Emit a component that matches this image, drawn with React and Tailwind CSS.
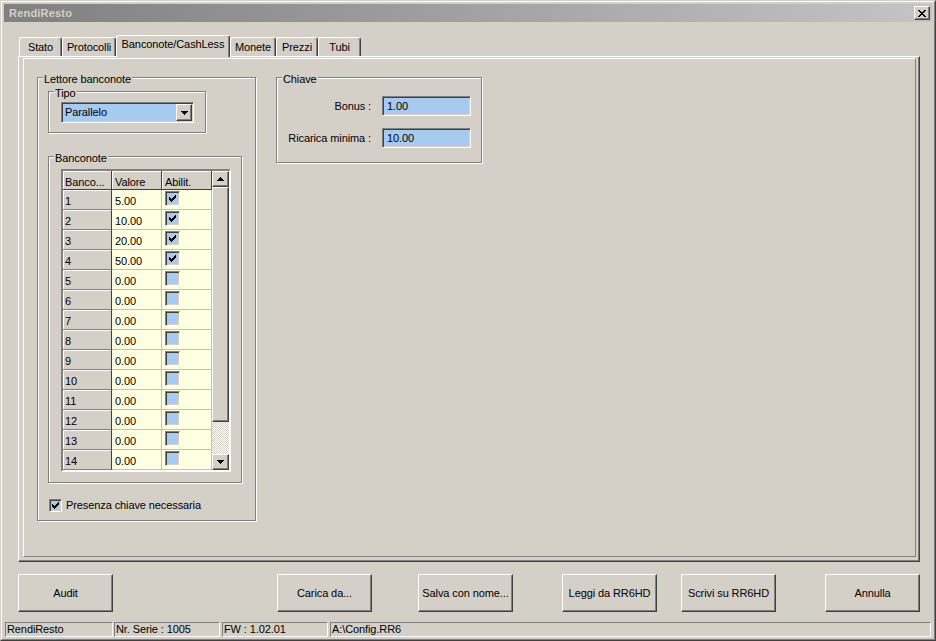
import React from "react";

const RAISED =
  "border border-t-white border-l-white border-r-[#404040] border-b-[#404040] shadow-[inset_-1px_-1px_0_#808080]";
const SUNKEN =
  "border border-t-[#808080] border-l-[#808080] border-r-white border-b-white shadow-[inset_1px_1px_0_#404040,inset_-1px_-1px_0_#d4d0c8]";
const ETCHED = "border border-[#808080] shadow-[inset_1px_1px_0_#fff,1px_1px_0_#fff]";
const STATUS =
  "border border-t-[#808080] border-l-[#808080] border-r-white border-b-white pl-[1px] flex items-center whitespace-nowrap";

function Group({ label, className, children }) {
  return (
    <div className={`relative ${ETCHED} ${className}`}>
      <span className="absolute left-[5px] top-[-5px] bg-[#d4d0c8] px-[1px] leading-[13px] whitespace-nowrap">
        {label}
      </span>
      {children}
    </div>
  );
}

function Check({ checked, size }) {
  const cls =
    size === 13
      ? `w-[13px] h-[13px] ${SUNKEN} bg-[#a6caf0] flex items-center justify-center shrink-0`
      : `w-[15px] h-[15px] ${SUNKEN} bg-[#a6caf0] flex items-center justify-center shrink-0`;
  return (
    <div className={cls}>
      {checked && (
        <svg width="7" height="7" viewBox="0 0 7 7" shapeRendering="crispEdges">
          <path d="M0 2h1v1h1v1h1v-1h1v-1h1v-1h1v-1h1v3h-1v1h-1v1h-1v1h-1v1h-1v-1h-1v-1h-1v-1h-1z" fill="#000" />
        </svg>
      )}
    </div>
  );
}

function ArrowDown() {
  return (
    <svg width="7" height="4" viewBox="0 0 7 4" shapeRendering="crispEdges">
      <path d="M0 0h7v1h-1v1h-1v1h-1v1h-1v-1h-1v-1h-1v-1h-1z" fill="#000" />
    </svg>
  );
}
function ArrowUp() {
  return (
    <svg width="7" height="4" viewBox="0 0 7 4" shapeRendering="crispEdges">
      <path d="M3 0h1v1h1v1h1v1h1v1h-7v-1h1v-1h1v-1h1z" fill="#000" />
    </svg>
  );
}

const tabs = [
  ["Stato", "w-[43px]"],
  ["Protocolli", "w-[54px]"],
  ["Banconote/CashLess", "w-[114px]", true],
  ["Monete", "w-[46px]"],
  ["Prezzi", "w-[42px]"],
  ["Tubi", "w-[43px]"],
];

const rows = [
  ["1", "5.00", true],
  ["2", "10.00", true],
  ["3", "20.00", true],
  ["4", "50.00", true],
  ["5", "0.00", false],
  ["6", "0.00", false],
  ["7", "0.00", false],
  ["8", "0.00", false],
  ["9", "0.00", false],
  ["10", "0.00", false],
  ["11", "0.00", false],
  ["12", "0.00", false],
  ["13", "0.00", false],
  ["14", "0.00", false],
];

const buttons = [
  ["Audit", "ml-[14px]"],
  ["Carica da...", "ml-[164px]"],
  ["Salva con nome...", "ml-[46px]"],
  ["Leggi da RR6HD", "ml-[49px]"],
  ["Scrivi su RR6HD", "ml-[24px]"],
  ["Annulla", "ml-[49px]"],
];

export default function App() {
  return (
    <div className="w-[936px] h-[641px] overflow-hidden bg-[#d4d0c8] font-['Liberation_Sans',Arial,sans-serif] text-[11px] leading-[13px] tracking-[-0.1px] text-black border border-t-[#d4d0c8] border-l-[#d4d0c8] border-r-[#404040] border-b-[#404040]">
      <div className="h-full border border-t-white border-l-white border-r-[#808080] border-b-[#808080] p-[2px] flex flex-col">
        {/* Title bar */}
        <div className="h-[18px] shrink-0 bg-linear-to-r from-[#808080] to-[#c4c4c4] flex items-center justify-between pl-[5px] pr-[2px]">
          <span className="font-bold text-[#d4d0c8] text-[11px] tracking-[0.2px]">RendiResto</span>
          <div className={`w-[16px] h-[14px] ${RAISED} bg-[#d4d0c8] flex items-center justify-center`}>
            <svg width="8" height="7" viewBox="0 0 8 7" shapeRendering="crispEdges">
              <path
                d="M0 0h2v1h1v1h2v-1h1v-1h2v1h-1v1h-1v1h-1v1h1v1h1v1h1v1h-2v-1h-1v-1h-2v1h-1v1h-2v-1h1v-1h1v-1h1v-1h-1v-1h-1v-1h-1z"
                fill="#000"
              />
            </svg>
          </div>
        </div>

        {/* Tabs */}
        <div className="mt-[13px] h-[21px] shrink-0 flex items-end ml-[15px]">
          {tabs.map(([t, w, sel]) =>
            sel ? (
              <div
                key={t}
                className={`${w} h-[22px] mb-[-1px] relative z-10 bg-[#d4d0c8] border-t border-l border-white border-r border-r-[#404040] shadow-[inset_-1px_0_0_#808080] rounded-t-[3px] flex justify-center pt-[2px] whitespace-nowrap`}
              >
                {t}
              </div>
            ) : (
              <div
                key={t}
                className={`${w} h-[19px] border-t border-l border-white border-r border-r-[#404040] shadow-[inset_-1px_0_0_#808080] rounded-t-[3px] flex items-center justify-center whitespace-nowrap`}
              >
                {t}
              </div>
            )
          )}
        </div>

        {/* Panel */}
        <div className="ml-[14px] w-[902px] h-[506px] shrink-0 border border-t-white border-l-white border-r-[#404040] border-b-[#404040] shadow-[inset_-1px_-1px_0_#808080] pt-[1px] pl-[4px] pr-[3px] pb-[4px] flex">
          <div className="flex-1 border border-t-white border-l-white border-r-[#808080] border-b-[#808080] flex items-start gap-[20px] pt-[18px] pl-[13px]">
            {/* Lettore banconote */}
            <Group label="Lettore banconote" className="w-[219px] h-[444px] flex flex-col items-start">
              <Group label="Tipo" className="ml-[10px] mt-[13px] w-[158px] h-[42px] pt-[10px] pl-[12px]">
                <div className={`w-[133px] h-[21px] ${SUNKEN} bg-[#a6caf0] flex items-center`}>
                  <span className="flex-1 pl-[3px]">Parallelo</span>
                  <div className="pr-[1px] pt-[1px] pb-[1px] h-full flex">
                    <div className={`w-[16px] h-full ${RAISED} bg-[#d4d0c8] flex items-center justify-center`}>
                      <ArrowDown />
                    </div>
                  </div>
                </div>
              </Group>

              <Group label="Banconote" className="ml-[10px] mt-[23px] w-[194px] h-[327px] pt-[12px] pl-[12px]">
                <div className="w-[170px] h-[303px] border-2 border-t-[#808080] border-l-[#808080] border-r-white border-b-white shadow-[inset_1px_1px_0_#404040,inset_-1px_-1px_0_#d4d0c8] flex bg-[#d4d0c8]">
                  <div className="flex flex-col">
                    <div className="flex h-[19px]">
                      <div className="w-[49px] h-full bg-[#d4d0c8] border-r border-b border-[#404040] shadow-[inset_1px_1px_0_#fff] pl-[2px] pt-[5px] whitespace-nowrap">
                        Banco...
                      </div>
                      <div className="w-[50px] h-full bg-[#d4d0c8] border-r border-b border-[#404040] shadow-[inset_1px_1px_0_#fff] pl-[3px] pt-[5px]">
                        Valore
                      </div>
                      <div className="w-[50px] h-full bg-[#d4d0c8] border-r border-b border-[#404040] shadow-[inset_1px_1px_0_#fff] pl-[3px] pt-[5px]">
                        Abilit.
                      </div>
                    </div>
                    {rows.map(([n, v, c]) => (
                      <div key={n} className="flex h-[20px]">
                        <div className="w-[49px] h-full bg-[#d4d0c8] border-r border-r-[#404040] border-b border-b-[#808080] shadow-[inset_1px_1px_0_#fff] pl-[2px] pt-[5px]">
                          {n}
                        </div>
                        <div className="w-[50px] h-full bg-[#ffffe1] border-r border-b border-[#c0c0c0] pl-[3px] pt-[5px]">
                          {v}
                        </div>
                        <div className="w-[50px] h-full bg-[#ffffe1] border-r border-b border-[#c0c0c0] pl-[3px] pt-[1px]">
                          <Check checked={c} />
                        </div>
                      </div>
                    ))}
                  </div>
                  <div className="w-[17px] flex flex-col">
                    <div className={`h-[16px] ${RAISED} bg-[#d4d0c8] flex items-center justify-center`}>
                      <ArrowUp />
                    </div>
                    <div className={`h-[235px] ${RAISED} bg-[#d4d0c8]`} />
                    <div className="flex-1 bg-[repeating-conic-gradient(#ffffff_0_25%,#d4d0c8_0_50%)] bg-[length:2px_2px]" />
                    <div className={`h-[16px] ${RAISED} bg-[#d4d0c8] flex items-center justify-center`}>
                      <ArrowDown />
                    </div>
                  </div>
                </div>
              </Group>

              <div className="ml-[11px] mt-[16px] flex items-center gap-[4px]">
                <Check checked size={13} />
                <span>Presenza chiave necessaria</span>
              </div>
            </Group>

            {/* Chiave */}
            <Group label="Chiave" className="w-[206px] h-[86px] flex flex-col pt-[18px] gap-[12px]">
              <div className="flex items-center">
                <span className="w-[94px] text-right whitespace-nowrap">Bonus :</span>
                <div className={`ml-[11px] w-[89px] h-[20px] ${SUNKEN} bg-[#a6caf0] pl-[4px] flex items-center`}>1.00</div>
              </div>
              <div className="flex items-center">
                <span className="w-[94px] text-right whitespace-nowrap">Ricarica minima :</span>
                <div className={`ml-[11px] w-[89px] h-[20px] ${SUNKEN} bg-[#a6caf0] pl-[4px] flex items-center`}>10.00</div>
              </div>
            </Group>
          </div>
        </div>

        {/* Buttons */}
        <div className="mt-[12px] h-[38px] shrink-0 flex">
          {buttons.map(([t, m]) => (
            <div key={t} className={`${m} w-[95px] h-full ${RAISED} bg-[#d4d0c8] flex items-center justify-center whitespace-nowrap`}>
              {t}
            </div>
          ))}
        </div>

        {/* Status bar */}
        <div className="mt-[10px] h-[15px] shrink-0 flex">
          <div className={`ml-[1px] w-[108px] ${STATUS}`}>RendiResto</div>
          <div className={`ml-[1px] w-[106px] ${STATUS}`}>Nr. Serie : 1005</div>
          <div className={`ml-[2px] w-[106px] ${STATUS}`}>FW : 1.02.01</div>
          <div className={`ml-[2px] flex-1 mr-[1px] ${STATUS}`}>A:\Config.RR6</div>
        </div>
      </div>
    </div>
  );
}
